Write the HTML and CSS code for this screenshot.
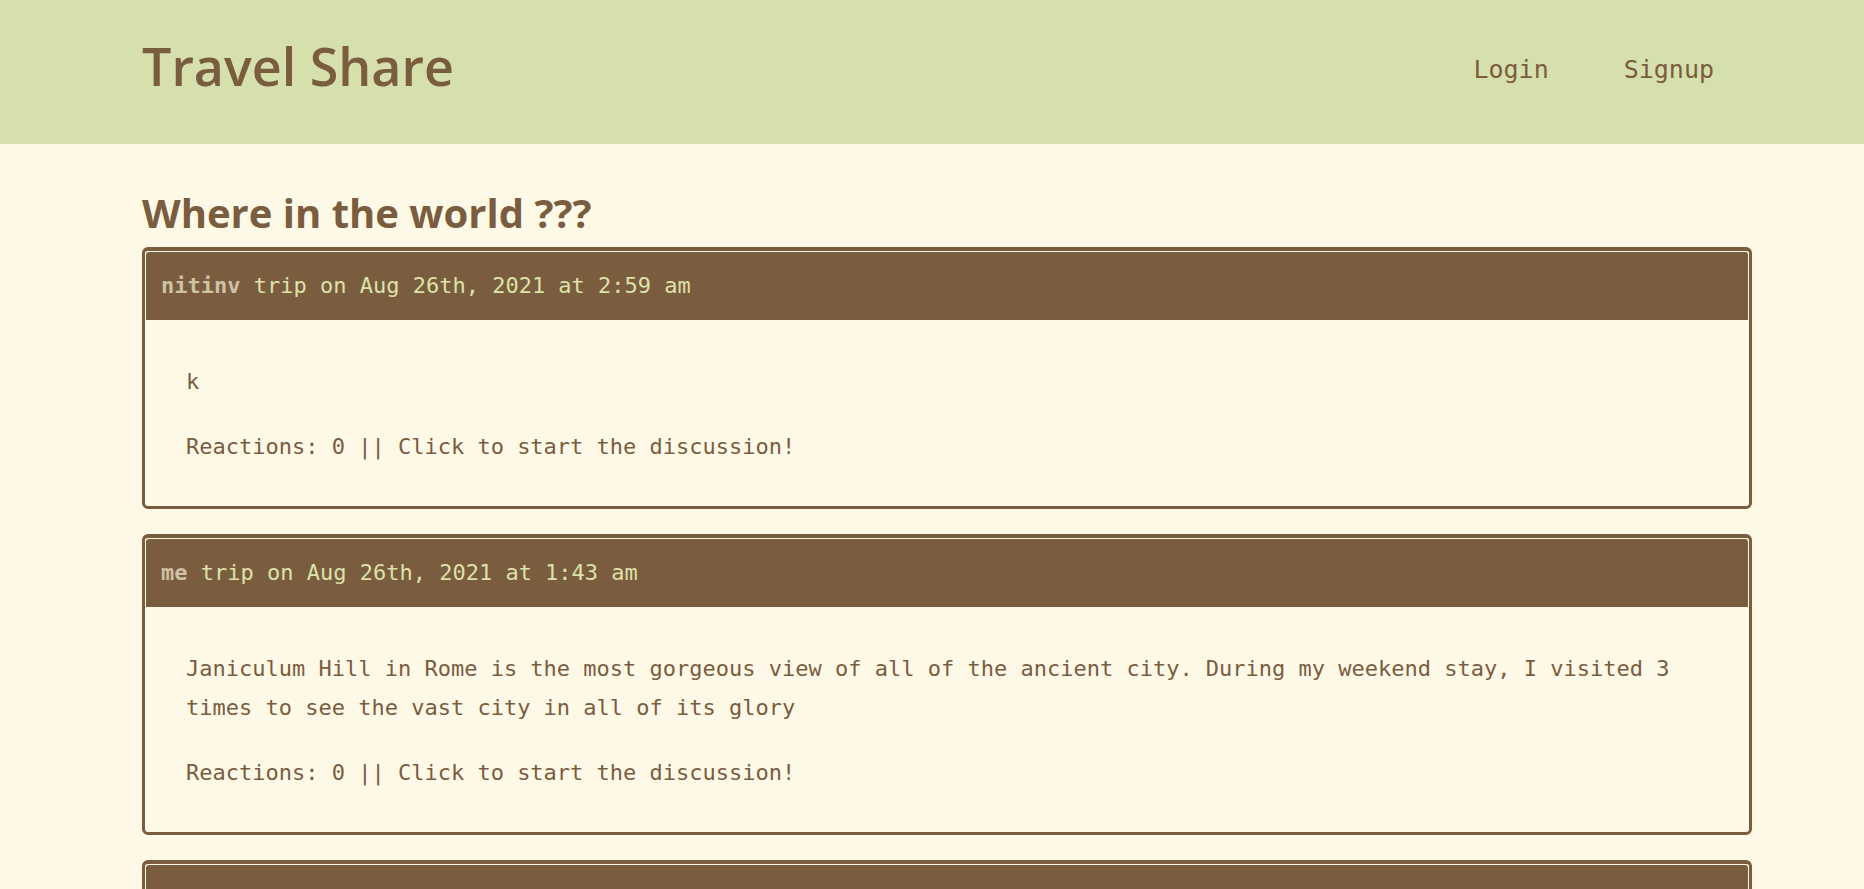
FILE: index.html
```html
<!DOCTYPE html>
<html lang="en">
<head>
<meta charset="utf-8">
<title>Travel Share</title>
<link rel="stylesheet" href="styles.css">
</head>
<body>
<header class="topbar">
  <h1 class="brand">Travel Share</h1>
  <nav class="nav">
    <a class="nav-link" href="#">Login</a>
    <a class="nav-link" href="#">Signup</a>
  </nav>
</header>
<main class="main">
  <h2 class="page-title">Where in the world ???</h2>
  <div class="card">
    <div class="card-header"><span class="user">nitinv</span> trip on Aug 26th, 2021 at 2:59 am</div>
    <div class="card-body">
      <p>k</p>
      <p>Reactions: 0 || Click to start the discussion!</p>
    </div>
  </div>
  <div class="card">
    <div class="card-header"><span class="user">me</span> trip on Aug 26th, 2021 at 1:43 am</div>
    <div class="card-body">
      <p>Janiculum Hill in Rome is the most gorgeous view of all of the ancient city. During my weekend stay, I visited 3 times to see the vast city in all of its glory</p>
      <p>Reactions: 0 || Click to start the discussion!</p>
    </div>
  </div>
  <div class="card">
    <div class="card-header"><span class="user">me</span> trip on Aug 25th, 2021 at 11:12 pm</div>
    <div class="card-body">
      <p>Reactions: 0 || Click to start the discussion!</p>
    </div>
  </div>
</main>
</body>
</html>
```
FILE: styles.css
```css
html, body {
  margin: 0;
  padding: 0;
}
body {
  background: #fef9e6;
  color: #7a5c3f;
  font-family: "DejaVu Sans Mono", "Liberation Mono", monospace;
}
.topbar {
  background: #d6e0ad;
  height: 144px;
  box-sizing: border-box;
  padding: 35px 150px 0 142px;
  display: flex;
  justify-content: space-between;
  align-items: flex-start;
}
.brand {
  margin: 0;
  font-family: "Open Sans", Lato, "Liberation Sans", sans-serif;
  font-weight: 600;
  font-size: 52px;
  line-height: 71px;
  margin-top: -5px;
  color: #7a5c3f;
}
.nav {
  display: flex;
  gap: 75px;
  margin-top: 20px;
}
.nav-link {
  font-family: "DejaVu Sans Mono", monospace;
  font-size: 25px;
  line-height: normal;
  color: #7a5c3f;
  text-decoration: none;
}
.main {
  margin-left: 142px;
  width: 1610px;
}
.page-title {
  margin: 45px 0 10px;
  font-family: "Open Sans", Lato, "Liberation Sans", sans-serif;
  font-weight: 700;
  font-size: 40px;
  line-height: 48px;
  color: #7a5c3f;
}
.card {
  border: 3px solid #7a5c3f;
  border-top-width: 4px;
  border-radius: 6px;
  padding: 1px;
  margin-bottom: 25px;
  background: #fef9e6;
}
.card-header {
  background: #7a5c3f;
  color: #dde2a8;
  font-size: 22px;
  line-height: 26px;
  padding: 21px 13px 21px 15px;
  border-radius: 3px 3px 0 0;
}
.user {
  font-weight: 700;
  color: #cfc2a4;
}
.card-body {
  padding: 16px 39px 13px 40px;
  font-size: 22px;
  line-height: 39px;
}
.card-body p {
  margin: 26px 0;
}
```
